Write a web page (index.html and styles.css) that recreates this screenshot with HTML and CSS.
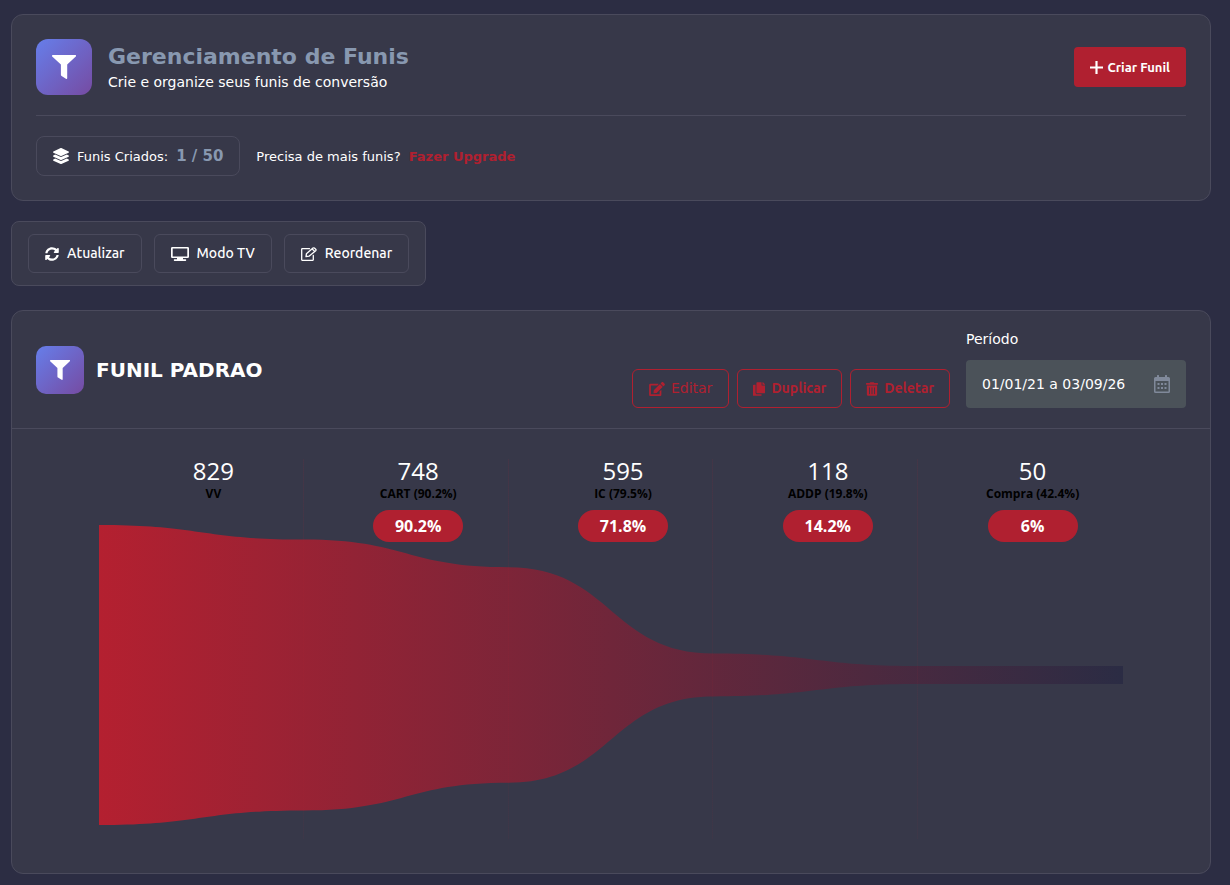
FILE: index.html
```html
<!DOCTYPE html>
<html lang="pt-BR">
<head>
<meta charset="utf-8">
<meta name="viewport" content="width=device-width, initial-scale=1">
<title>Gerenciamento de Funis</title>
<link rel="stylesheet" href="styles.css">
</head>
<body>
<svg class="sprite" aria-hidden="true">
  <symbol id="i-funnel" viewBox="0 0 24 24"><path d="M.8 0h22.400c.9 0 1.200 1 .6 1.600L15.200 9.500V23.200c0 .7-.7 1-1.300.6L9.600 21c-.4-.3-.7-.7-.7-1.300V9.500L.2 1.600C-.3 1 0 0 .8 0z"/></symbol>
  <symbol id="i-layers" viewBox="0 0 512 512"><path d="M12.400 148l232.900 105.700c6.800 3.100 14.500 3.100 21.300 0l232.900-105.700c16.600-7.500 16.600-32.500 0-40L266.700 2.300a25.600 25.600 0 0 0-21.300 0L12.400 108c-16.600 7.500-16.600 32.500 0 40zm487.200 88.300l-58.100-26.300-161.600 73.300c-15.200 6.900-32.500 6.900-47.700 0L70.600 210l-58.100 26.300c-16.600 7.500-16.600 32.500 0 40l232.900 105.600c6.800 3.100 14.500 3.100 21.300 0l232.900-105.600c16.600-7.500 16.600-32.500 0-40zm0 127.800l-57.900-26.200-161.900 73.400c-15.200 6.900-32.500 6.900-47.700 0L70.300 337.900l-57.900 26.200c-16.600 7.500-16.600 32.500 0 40l232.900 105.600c6.800 3.100 14.500 3.100 21.300 0l232.900-105.600c16.600-7.500 16.600-32.500 0-40z"/></symbol>
  <symbol id="i-plus" viewBox="0 0 12 12"><path d="M5 0h2v5h5v2H7v5H5V7H0V5h5z"/></symbol>
  <symbol id="i-sync" viewBox="0 0 512 512"><path d="M370.700 133.300C339.500 104 298.900 88 255.800 88c-77.500.1-144.300 53.200-162.800 126.900-1.300 5.400-6.100 9.100-11.700 9.100H24.100c-7.500 0-13.200-6.800-11.800-14.200C33.900 94.900 134.800 8 256 8c66.400 0 126.800 26.100 171.300 68.700L463 41C478.100 25.900 504 36.600 504 57.900V192c0 13.300-10.700 24-24 24H345.900c-21.400 0-32.100-25.900-17-41zM32 296h134.100c21.400 0 32.100 25.900 17 41l-41.800 41.800c31.300 29.300 71.800 45.300 114.900 45.300 77.400-.1 144.300-53.100 162.800-126.800 1.300-5.400 6.100-9.200 11.700-9.200h57.300c7.500 0 13.200 6.800 11.800 14.200C478.100 417.100 377.200 504 256 504c-66.400 0-126.800-26.100-171.300-68.700L49 471C33.900 486.100 8 475.400 8 454.100V320c0-13.300 10.700-24 24-24z"/></symbol>
  <symbol id="i-tv" viewBox="0 0 18 14"><path fill-rule="evenodd" d="M1.300 0h15.400Q18 0 18 1.300v8.400Q18 11 16.700 11H12v1.300h2.500q.7 0 .7.800t-.7.900h-11q-.7 0-.7-.9t.7-.8H6V11H1.300Q0 11 0 9.700V1.300Q0 0 1.300 0zM1.700 1.600v7.800h14.600V1.600z"/></symbol>
  <symbol id="i-edit-line" viewBox="0 0 16 14"><path fill="none" stroke="currentColor" stroke-width="1.300" stroke-linejoin="round" stroke-linecap="round" d="M8.500 1.700H1.200q-.5 0-.5.500v10.600q0 .5.500.5h10.600q.5 0 .5-.5V8.500M5 9.600l.4-2.800L12 1.100q.7-.6 1.400 0l1.300 1.200q.7.700 0 1.400L8 9.200zM11.200 2l2.500 2.400"/></symbol>
  <symbol id="i-edit" viewBox="0 0 576 512"><path d="M402.600 83.200l90.200 90.200c3.800 3.800 3.800 10 0 13.800L274.400 405.600l-92.800 10.300c-12.400 1.400-22.900-9.100-21.500-21.500l10.300-92.800L388.800 83.200c3.800-3.800 10-3.800 13.800 0zm162-22.900l-48.800-48.800c-15.200-15.200-39.900-15.200-55.200 0l-35.400 35.400c-3.800 3.800-3.800 10 0 13.800l90.200 90.200c3.800 3.800 10 3.800 13.800 0l35.400-35.400c15.200-15.300 15.200-40 0-55.200zM384 346.200V448H64V128h229.800c3.200 0 6.200-1.300 8.500-3.500l40-40c7.600-7.600 2.200-20.500-8.500-20.500H48C21.500 64 0 85.500 0 112v352c0 26.500 21.500 48 48 48h352c26.500 0 48-21.500 48-48V306.200c0-10.700-12.900-16-20.500-8.500l-40 40c-2.200 2.300-3.500 5.300-3.500 8.500z"/></symbol>
  <symbol id="i-copy" viewBox="0 0 448 512"><path d="M320 448v40c0 13.300-10.700 24-24 24H24c-13.300 0-24-10.700-24-24V120c0-13.300 10.700-24 24-24h72v296c0 30.900 25.100 56 56 56h168zm0-344V0H152c-13.300 0-24 10.700-24 24v368c0 13.300 10.700 24 24 24h272c13.300 0 24-10.700 24-24V128H344c-13.200 0-24-10.800-24-24zm121-31L375 7a24 24 0 0 0-17-7h-6v96h96v-6.100a24 24 0 0 0-7-16.900z"/></symbol>
  <symbol id="i-trash" viewBox="0 0 448 512"><path fill-rule="evenodd" d="M32 464a48 48 0 0 0 48 48h288a48 48 0 0 0 48-48V128H32zm272-256a16 16 0 0 1 32 0v224a16 16 0 0 1-32 0zm-96 0a16 16 0 0 1 32 0v224a16 16 0 0 1-32 0zm-96 0a16 16 0 0 1 32 0v224a16 16 0 0 1-32 0zM432 32H312l-9.400-18.700A24 24 0 0 0 281.100 0H166.800a23.700 23.700 0 0 0-21.400 13.300L136 32H16A16 16 0 0 0 0 48v32a16 16 0 0 0 16 16h416a16 16 0 0 0 16-16V48a16 16 0 0 0-16-16z"/></symbol>
  <symbol id="i-calendar" viewBox="0 0 16 18"><path fill-rule="evenodd" d="M3 .5Q3 0 3.500 0h1Q5 0 5 .5V2h6V.5q0-.5.5-.5h1q.5 0 .5.500V2h1.500Q16 2 16 3.500v13q0 1.500-1.500 1.500h-13Q0 18 0 16.500v-13Q0 2 1.500 2H3zM1.500 6v10.500h13V6z"/><path d="M3.500 8h2v2h-2zm3.500 0h2v2H7zm3.500 0h2v2h-2zM3.500 12h2v2h-2zM7 12h2v2H7zm3.500 0h2v2h-2z"/></symbol>
</svg>
<main class="page">
  <section class="card intro">
    <div class="intro-top">
      <span class="badge badge-lg"><svg class="badge-icon"><use href="#i-funnel"/></svg></span>
      <div class="intro-text">
        <h1 class="title">Gerenciamento de Funis</h1>
        <p class="subtitle">Crie e organize seus funis de conversão</p>
      </div>
      <button class="btn-create" type="button"><svg class="icon-plus"><use href="#i-plus"/></svg>Criar Funil</button>
    </div>
    <div class="intro-bottom">
      <div class="counter">
        <svg class="icon-layers"><use href="#i-layers"/></svg>
        <span>Funis Criados:</span>
        <strong class="counter-value">1 / 50</strong>
      </div>
      <p class="upsell">Precisa de mais funis? <a class="upgrade" href="#upgrade">Fazer Upgrade</a></p>
    </div>
  </section>

  <nav class="toolbar" aria-label="Ações">
    <button class="tool" type="button"><svg class="icon-sync"><use href="#i-sync"/></svg>Atualizar</button>
    <button class="tool" type="button"><svg class="icon-tv"><use href="#i-tv"/></svg>Modo TV</button>
    <button class="tool" type="button"><svg class="icon-reorder"><use href="#i-edit-line"/></svg>Reordenar</button>
  </nav>

  <section class="card funnel">
    <header class="funnel-head">
      <span class="badge"><svg class="badge-icon-sm"><use href="#i-funnel"/></svg></span>
      <h2 class="funnel-name">FUNIL PADRAO</h2>
      <div class="funnel-controls">
        <div class="funnel-actions">
          <a class="action action-edit" href="#editar"><svg class="icon-edit"><use href="#i-edit"/></svg>Editar</a>
          <button class="action" type="button"><svg class="icon-copy"><use href="#i-copy"/></svg>Duplicar</button>
          <button class="action" type="button"><svg class="icon-copy"><use href="#i-trash"/></svg>Deletar</button>
        </div>
        <div class="period">
          <label class="period-label" for="periodo">Período</label>
          <div class="period-box">
            <input class="period-input" id="periodo" type="text" value="01/01/21 a 03/09/26">
            <svg class="icon-calendar"><use href="#i-calendar"/></svg>
          </div>
        </div>
      </div>
    </header>
    <div class="chart">
      <svg class="chart-shape" viewBox="0 0 1024 300" preserveAspectRatio="none" aria-hidden="true">
        <defs><linearGradient id="fade"><stop offset="0" stop-color="#b42030"/><stop offset="1" stop-color="#2b2c44"/></linearGradient></defs>
        <path fill="url(#fade)" d="M0 0C102.400 0 102.400 14.600 204.800 14.600S307.200 42.300 409.600 42.300 512 128.600 614.400 128.600 716.800 141 819.200 141H1024V159H819.200C716.800 159 716.800 171.400 614.400 171.400S512 257.700 409.600 257.700 307.200 285.400 204.800 285.400 102.400 300 0 300z"/>
      </svg>
      <ol class="stages">
        <li class="stage"><span class="stage-value">829</span><span class="stage-name">VV</span></li>
        <li class="stage"><span class="stage-value">748</span><span class="stage-name">CART (90.2%)</span><span class="stage-rate">90.2%</span></li>
        <li class="stage"><span class="stage-value">595</span><span class="stage-name">IC (79.5%)</span><span class="stage-rate">71.8%</span></li>
        <li class="stage"><span class="stage-value">118</span><span class="stage-name">ADDP (19.8%)</span><span class="stage-rate">14.2%</span></li>
        <li class="stage"><span class="stage-value">50</span><span class="stage-name">Compra (42.4%)</span><span class="stage-rate">6%</span></li>
      </ol>
    </div>
  </section>
</main>
</body>
</html>
```

FILE: styles.css
```css
:root {
  --bg: #2c2d43;
  --panel: #373849;
  --line: #4a4a5c;
  --red: #b02030;
  --muted: #8898b0;
  --ui: Ubuntu, "Noto Sans", sans-serif;
}
* { box-sizing: border-box; }
body {
  margin: 0;
  background: var(--bg);
  color: #fff;
  font: 14px/21px "DejaVu Sans", sans-serif;
}
h1, h2, p, ol { margin: 0; padding: 0; }
svg { fill: currentColor; flex: none; }
button, input { font: inherit; color: inherit; }
.sprite { position: absolute; width: 0; height: 0; }

.page { padding: 14px 19px 11px 11px; }
.card {
  background: var(--panel);
  border: 1px solid var(--line);
  border-radius: 12px;
}
.badge {
  display: flex;
  align-items: center;
  justify-content: center;
  flex: none;
  width: 48px;
  height: 48px;
  border-radius: 10px;
  background: linear-gradient(135deg, #667eea, #764ba2);
}
.badge-lg { width: 56px; height: 56px; border-radius: 12px; }
.badge-icon { width: 24px; height: 24px; }
.badge-icon-sm { width: 20px; height: 20px; }

.intro { padding: 24px; }
.intro-top {
  display: flex;
  align-items: center;
  gap: 16px;
  padding-bottom: 20px;
  border-bottom: 1px solid var(--line);
}
.intro-text { flex: 1; }
.title { color: var(--muted); font-size: 22px; line-height: 30px; }
.subtitle { line-height: 20px; }
.btn-create {
  display: flex;
  align-items: center;
  justify-content: center;
  gap: 4px;
  height: 40px;
  padding: 0 16px;
  border: 0;
  border-radius: 4px;
  background: var(--red);
  font: 700 13px/20px var(--ui);
}
.icon-plus { width: 13px; height: 13px; }
.intro-bottom {
  display: flex;
  align-items: center;
  gap: 16px;
  padding-top: 20px;
  font-size: 13px;
}
.counter {
  display: flex;
  align-items: center;
  gap: 8px;
  height: 40px;
  padding: 0 16px;
  border: 1px solid var(--line);
  border-radius: 8px;
}
.icon-layers { width: 16px; height: 16px; }
.counter-value { color: var(--muted); font-size: 15px; }
.upgrade { margin-left: 4px; color: var(--red); font-weight: 700; text-decoration: none; }

.toolbar {
  display: flex;
  gap: 12px;
  width: fit-content;
  margin: 20px 0 24px;
  padding: 12px 16px;
  background: var(--panel);
  border: 1px solid var(--line);
  border-radius: 8px;
}
.tool {
  display: flex;
  align-items: center;
  gap: 8px;
  height: 39px;
  padding: 0 16px;
  background: transparent;
  border: 1px solid var(--line);
  border-radius: 6px;
  font: 550 14px/21px var(--ui);
}
.icon-sync { width: 14px; height: 14px; }
.icon-tv { width: 18px; height: 14px; }
.icon-reorder { width: 16px; height: 14px; }

.funnel-head {
  display: flex;
  align-items: center;
  gap: 12px;
  padding: 20px 24px;
  border-bottom: 1px solid var(--line);
}
.funnel-name { font-size: 20px; line-height: 24px; }
.funnel-controls { display: flex; align-items: flex-end; gap: 16px; margin-left: auto; }
.funnel-actions { display: flex; gap: 8px; }
.action {
  display: flex;
  align-items: center;
  justify-content: center;
  gap: 6px;
  height: 39px;
  padding: 0 15px;
  background: transparent;
  border: 1px solid var(--red);
  border-radius: 6px;
  color: var(--red);
  font: 600 14px/21px var(--ui);
  text-decoration: none;
}
.action-edit { padding: 0 16px; font: 14px/21px "DejaVu Sans", sans-serif; }
.icon-edit { width: 16px; height: 14px; }
.icon-copy { width: 12px; height: 14px; }
.period { width: 220px; }
.period-label { display: block; margin-bottom: 12px; font-size: 14px; line-height: 17px; }
.period-box {
  display: flex;
  align-items: center;
  height: 48px;
  padding: 0 16px;
  border-radius: 4px;
  background: #4b5259;
}
.period-input { flex: 1; min-width: 0; padding: 0; background: none; border: 0; font-size: 14px; }
.icon-calendar { width: 16px; height: 18px; color: #80899a; }

.chart {
  display: grid;
  padding: 30px 87px 34px;
}
.chart-shape { grid-area: 1 / 1; width: 100%; height: 300px; margin-top: 66px; }
.stages {
  grid-area: 1 / 1;
  z-index: 1;
  display: grid;
  grid-template-columns: repeat(5, 1fr);
  height: 380px;
  list-style: none;
}
.stage {
  display: flex;
  flex-direction: column;
  align-items: center;
  padding-left: 24px;
  background: linear-gradient(rgb(176 32 48 / 10%), rgb(176 32 48 / 5%)) right / 1px 100% no-repeat;
  font-family: "Open Sans", "Noto Sans", sans-serif;
}
.stage:last-child { background: none; }
.stage-value { font-size: 24px; font-weight: 400; line-height: 24px; }
.stage-name { margin-bottom: 5px; color: #000; font-size: 12px; font-weight: 700; line-height: 22px; }
.stage-rate {
  min-width: 90px;
  border-radius: 16px;
  background: var(--red);
  font-size: 16px;
  font-weight: 700;
  line-height: 32px;
  text-align: center;
}
```
